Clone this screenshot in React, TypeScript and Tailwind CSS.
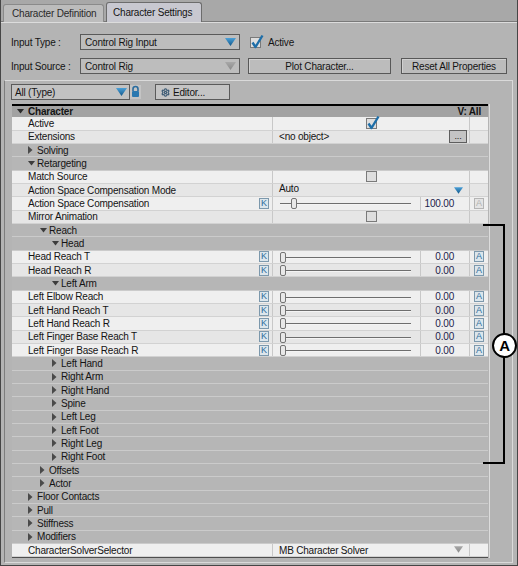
import { Settings } from "lucide-react";

type Row =
  | { kind: "group"; label: string; level: 1 | 2 | 3; open?: boolean }
  | { kind: "prop"; label: string; value: Value; k?: boolean; a?: "on" | "off" };

type Value =
  | { type: "check"; checked: boolean }
  | { type: "object" }
  | { type: "combo"; text: string; blue: boolean }
  | { type: "slider"; num: string; pos: number };

const rows: Row[] = [
  { kind: "prop", label: "Active", value: { type: "check", checked: true } },
  { kind: "prop", label: "Extensions", value: { type: "object" } },
  { kind: "group", label: "Solving", level: 1 },
  { kind: "group", label: "Retargeting", level: 1, open: true },
  { kind: "prop", label: "Match Source", value: { type: "check", checked: false } },
  { kind: "prop", label: "Action Space Compensation Mode", value: { type: "combo", text: "Auto", blue: true } },
  { kind: "prop", label: "Action Space Compensation", value: { type: "slider", num: "100.00", pos: 1 }, k: true, a: "off" },
  { kind: "prop", label: "Mirror Animation", value: { type: "check", checked: false } },
  { kind: "group", label: "Reach", level: 2, open: true },
  { kind: "group", label: "Head", level: 3, open: true },
  { kind: "prop", label: "Head Reach T", value: { type: "slider", num: "0.00", pos: 0 }, k: true, a: "on" },
  { kind: "prop", label: "Head Reach R", value: { type: "slider", num: "0.00", pos: 0 }, k: true, a: "on" },
  { kind: "group", label: "Left Arm", level: 3, open: true },
  { kind: "prop", label: "Left Elbow Reach", value: { type: "slider", num: "0.00", pos: 0 }, k: true, a: "on" },
  { kind: "prop", label: "Left Hand Reach T", value: { type: "slider", num: "0.00", pos: 0 }, k: true, a: "on" },
  { kind: "prop", label: "Left Hand Reach R", value: { type: "slider", num: "0.00", pos: 0 }, k: true, a: "on" },
  { kind: "prop", label: "Left Finger Base Reach T", value: { type: "slider", num: "0.00", pos: 0 }, k: true, a: "on" },
  { kind: "prop", label: "Left Finger Base Reach R", value: { type: "slider", num: "0.00", pos: 0 }, k: true, a: "on" },
  { kind: "group", label: "Left Hand", level: 3 },
  { kind: "group", label: "Right Arm", level: 3 },
  { kind: "group", label: "Right Hand", level: 3 },
  { kind: "group", label: "Spine", level: 3 },
  { kind: "group", label: "Left Leg", level: 3 },
  { kind: "group", label: "Left Foot", level: 3 },
  { kind: "group", label: "Right Leg", level: 3 },
  { kind: "group", label: "Right Foot", level: 3 },
  { kind: "group", label: "Offsets", level: 2 },
  { kind: "group", label: "Actor", level: 2 },
  { kind: "group", label: "Floor Contacts", level: 1 },
  { kind: "group", label: "Pull", level: 1 },
  { kind: "group", label: "Stiffness", level: 1 },
  { kind: "group", label: "Modifiers", level: 1 },
  { kind: "prop", label: "CharacterSolverSelector", value: { type: "combo", text: "MB Character Solver", blue: false } },
];

const indent = { 1: "pl-[16px]", 2: "pl-[28px]", 3: "pl-[40px]" };

function TriDown({ color = "#3c3c3c" }) {
  return (
    <svg width="7" height="5" viewBox="0 0 7 5">
      <polygon points="0,0 7,0 3.5,4.5" fill={color} />
    </svg>
  );
}

function TriRight() {
  return (
    <svg width="5" height="8" viewBox="0 0 5 8">
      <polygon points="0,0 4.5,4 0,8" fill="#4a4a4a" />
    </svg>
  );
}

function ComboArrow({ blue, w = 11, h = 8 }) {
  return (
    <svg width={w} height={h} viewBox="0 0 11 8">
      <defs>
        <linearGradient id="bl" x1="0" y1="0" x2="0" y2="1">
          <stop offset="0" stopColor="#4aa0d8" />
          <stop offset="1" stopColor="#14588a" />
        </linearGradient>
        <linearGradient id="gr" x1="0" y1="0" x2="0" y2="1">
          <stop offset="0" stopColor="#a8a8a8" />
          <stop offset="1" stopColor="#8a8a8a" />
        </linearGradient>
      </defs>
      <polygon points="0,0 11,0 5.5,8" fill={blue ? "url(#bl)" : "url(#gr)"} />
    </svg>
  );
}

function CheckBox({ checked }) {
  return (
    <span className="relative inline-block w-[11px] h-[11px] bg-[#dedede] border border-[#7a7a7a]">
      {checked && (
        <svg className="absolute left-[0px] top-[-3px] overflow-visible" width="12" height="13" viewBox="0 0 12 13">
          <path d="M1.5 7.5 L4.5 12 L11.5 0.5" fill="none" stroke="#1e6ea8" strokeWidth="2.4" strokeLinejoin="round" />
        </svg>
      )}
    </span>
  );
}

function KeyBtn({ letter, off }) {
  return (
    <span
      className={
        off
          ? "w-[10px] h-[11px] flex items-center justify-center border border-[#b4b4b4] bg-[#e4e4e4] text-[#b0b0b0] text-[9px] leading-none"
          : "w-[10px] h-[11px] flex items-center justify-center border border-[#7c98ac] bg-[#dce6ec] text-[#2c6c9c] text-[9px] leading-none"
      }
    >
      {letter}
    </span>
  );
}

function Slider({ pos }) {
  return (
    <div className="relative w-full h-full">
      <div className="absolute left-[7px] right-[9px] top-[6px] h-[2px] border-t border-[#6e6e6e] border-b border-b-[#f4f4f4]" />
      <div
        className={
          pos
            ? "absolute left-[18px] top-[1px] w-[6px] h-[11px] rounded-[2px] bg-[#e8e8e8] border border-[#747474]"
            : "absolute left-[7px] top-[1px] w-[6px] h-[11px] rounded-[2px] bg-[#e8e8e8] border border-[#747474]"
        }
      />
    </div>
  );
}

function ValueCell({ v }: { v: Value }) {
  if (v.type === "check")
    return (
      <div className="w-[197px] flex items-center justify-center border-r border-[#c8c8c8]">
        <CheckBox checked={v.checked} />
      </div>
    );
  if (v.type === "object")
    return (
      <div className="w-[197px] flex items-center justify-between pl-[6px] pr-[2px] border-r border-[#c8c8c8]">
        <span>&lt;no object&gt;</span>
        <span className="w-[18px] h-[13px] flex items-end justify-center pb-[1px] bg-[#c4c4c4] border border-[#5e5e5e] text-[9px] leading-none">
          ...
        </span>
      </div>
    );
  if (v.type === "combo")
    return (
      <div className="w-[197px] flex items-center justify-between pl-[6px] pr-[6px] border-r border-[#c8c8c8]">
        <span className={v.blue ? "-mt-[3px]" : ""}>{v.text}</span>
        <ComboArrow blue={v.blue} w={9} h={7} />
      </div>
    );
  return (
    <div className="w-[197px] flex border-r border-[#c8c8c8]">
      <div className="w-[148px] border-r border-[#c8c8c8]">
        <Slider pos={v.pos} />
      </div>
      <div className="flex-1 flex items-center justify-end pr-[15px] text-[#1c1c4c]">{v.num}</div>
    </div>
  );
}

function GridRow({ row, light }: { row: Row; light: boolean }) {
  if (row.kind === "group")
    return (
      <div className={"h-[13.33px] flex items-center bg-[#b6b6b6] border-b border-[#cbcbcb] " + indent[row.level]}>
        <span className="w-[9px] flex items-center">{row.open ? <TriDown /> : <TriRight />}</span>
        <span>{row.label}</span>
      </div>
    );
  return (
    <div className={"h-[13.33px] flex border-b border-[#d2d2d2] " + (light ? "bg-[#efefef]" : "bg-[#e6e6e6]")}>
      <div className="w-[261px] flex items-center justify-between pl-[16px] pr-[3px] border-r border-[#c8c8c8]">
        <span>{row.label}</span>
        {row.k && <KeyBtn letter="K" off={false} />}
      </div>
      <ValueCell v={row.value} />
      <div className="flex-1 flex items-center justify-center">{row.a && <KeyBtn letter="A" off={row.a === "off"} />}</div>
    </div>
  );
}

function PropertyGrid() {
  let alt = false;
  let prevProp = false;
  return (
    <div className="w-[476px] ml-[7px] mt-[4px] border-b border-[#4e4e4e]">
      <div className="h-[13.33px] flex items-center justify-between bg-[#a2a2a2] border-t-2 border-black pl-[5px] pr-[7px] font-bold">
        <span className="flex items-center">
          <span className="w-[11px] flex items-center">
            <TriDown color="#2a2a2a" />
          </span>
          Character
        </span>
        <span>V: All</span>
      </div>
      {rows.map((r, i) => {
        if (r.kind === "prop") {
          alt = prevProp ? !alt : true;
          prevProp = true;
        } else prevProp = false;
        return <GridRow key={i} row={r} light={alt} />;
      })}
    </div>
  );
}

function LockIcon() {
  return (
    <svg width="11" height="14" viewBox="0 0 11 14">
      <rect x="0" y="0" width="11" height="14" fill="#c4c4c4" />
      <path d="M3 6 V4 a2.5 2.5 0 0 1 5 0 V6" fill="none" stroke="#2a6c9e" strokeWidth="1.6" />
      <rect x="2" y="6" width="7" height="6" rx="1" fill="#2a78b0" />
    </svg>
  );
}

export default function App() {
  return (
    <div className="w-[518px] h-[566px] bg-[#b4b4b4] border-x border-b border-[#464646] flex flex-col text-[10px] tracking-[-0.2px] text-[#141414] font-['Liberation_Sans',Arial,sans-serif] relative overflow-hidden">
      {/* tabs */}
      <div className="h-[23px] shrink-0 flex items-end gap-[2px] pl-[2px] bg-[#a8a8a8] border-b border-[#dcdcdc] shadow-[inset_0_-1px_0_#7a7a7a]">
        <div className="w-[101px] h-[18px] flex items-center pl-[8px] bg-[#bcbcbc] border border-b-0 border-[#8a8a8a] rounded-t-[3px] text-[#2a2a2a]">
          Character Definition
        </div>
        <div className="w-[96px] h-[20px] flex items-center pl-[6px] bg-[#c8c8d0] border border-b-0 border-[#6c6c6c] rounded-t-[3px]">
          Character Settings
        </div>
      </div>

      {/* inputs */}
      <div className="pl-[10px] pt-[11px]">
        <div className="h-[16px] flex items-center">
          <span className="w-[69px]">Input Type :</span>
          <div className="w-[160px] h-[16px] flex items-center justify-between pl-[4px] pr-[3px] bg-[#bdbdbd] border border-[#5a5a5a]">
            <span>Control Rig Input</span>
            <ComboArrow blue />
          </div>
          <span className="ml-[10px] flex items-center">
            <CheckBox checked />
          </span>
          <span className="ml-[7px]">Active</span>
        </div>
        <div className="h-[16px] mt-[8px] flex items-center">
          <span className="w-[69px]">Input Source :</span>
          <div className="w-[160px] h-[16px] flex items-center justify-between pl-[4px] pr-[3px] bg-[#bdbdbd] border border-[#5a5a5a]">
            <span>Control Rig</span>
            <ComboArrow blue={false} />
          </div>
          <button className="ml-[8px] w-[143px] h-[16px] bg-[#bcbcbc] border border-[#585858] shadow-[inset_1px_1px_0_#d0d0d0]">
            Plot Character...
          </button>
          <button className="ml-[10px] w-[106px] h-[16px] bg-[#bcbcbc] border border-[#585858] shadow-[inset_1px_1px_0_#d0d0d0]">
            Reset All Properties
          </button>
        </div>
      </div>

      {/* property panel */}
      <div className="ml-[3px] mt-[6px] w-[509px] flex-1 mb-[2px] border border-[#dadada] border-l-[#7e7e7e] pt-[3px] flex flex-col">
        <div className="h-[16px] flex items-center pl-[6px]">
          <div className="w-[119px] h-[16px] flex items-center justify-between pl-[3px] pr-[2px] bg-[#c2c2c2] border border-[#5a5a5a]">
            <span>All (Type)</span>
            <ComboArrow blue />
          </div>
          <LockIcon />
          <button className="ml-[14px] w-[75px] h-[16px] flex items-center gap-[3px] pl-[5px] bg-[#c4c4c4] border border-[#5a5a5a]">
            <Settings size={9} strokeWidth={3.2} color="#3c5a74" />
            <span>Editor...</span>
          </button>
        </div>
        <div className="flex">
          <PropertyGrid />
          <div className="w-[1px] ml-[1px] mt-[4px] bg-[#dcdcdc]" />
        </div>
      </div>

      {/* annotation A */}
      <div className="absolute left-[482px] top-[224px] w-[22px] h-[240px] border-2 border-l-0 border-black" />
      <div className="absolute left-[491px] top-[333px] w-[25px] h-[25px] rounded-full border-2 border-black bg-white flex items-center justify-center font-['Liberation_Sans',Arial,sans-serif] font-bold text-[15px] leading-none text-black">
        A
      </div>
    </div>
  );
}
